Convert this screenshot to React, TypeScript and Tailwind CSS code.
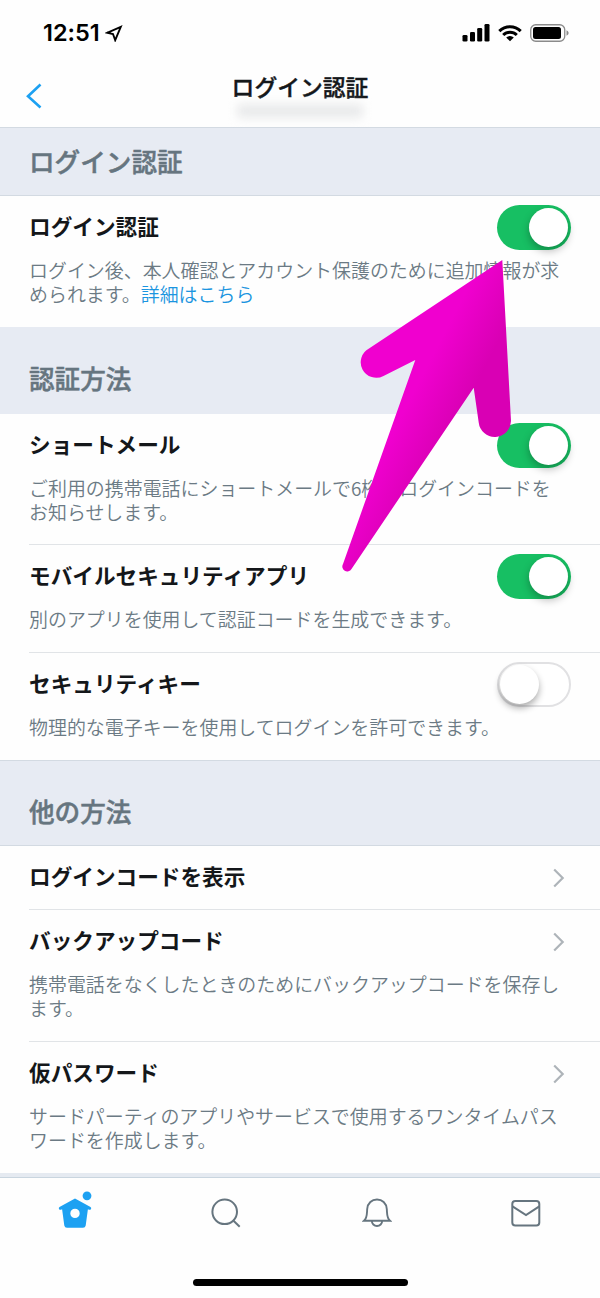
import React from "react";

function Toggle({ on }: { on: boolean }) {
  return on ? (
    <div className="flex h-[45px] w-[74px] shrink-0 items-center justify-end rounded-full bg-[#17bf63] pr-[3px]">
      <div className="size-[39px] rounded-full bg-white shadow-[0_4px_8px_rgba(0,0,0,0.28)]" />
    </div>
  ) : (
    <div className="flex h-[45px] w-[74px] shrink-0 items-center rounded-full border-[2.5px] border-[#e1e1e3] bg-white pl-px">
      <div className="size-[39px] rounded-full bg-white shadow-[0_4px_7px_rgba(0,0,0,0.33)]" />
    </div>
  );
}

function Chevron() {
  return (
    <svg className="mt-[13px] mr-[6px] shrink-0" width="12" height="20" viewBox="0 0 12 20" fill="none" stroke="#aeb4b9" strokeWidth="2.200">
      <path d="M1.200 1.500 9.700 10l-8.500 8.500" />
    </svg>
  );
}

function Section({ title, className }: { title: string; className: string }) {
  return (
    <div className={`flex items-end border-[#d3dae2] bg-[#e7ebf3] pl-[29px] ${className}`}>
      <h2 className="text-[25.6px] leading-[30px] font-medium text-[#66757f] [-webkit-text-stroke:0.5px_#66757f]">{title}</h2>
    </div>
  );
}

type RowProps = { title: string; desc?: React.ReactNode; control: React.ReactNode; className: string; line?: boolean };

function Row({ title, desc, control, className, line = true }: RowProps) {
  return (
    <div className={`pl-[29px] ${className}`}>
      <div className={`h-full pt-[9px] ${line ? "border-b border-[#e1e4e7]" : ""}`}>
        <div className="flex h-[45px] justify-between pr-[29px]">
          <h3 className="pt-[9px] text-[21.650px] leading-[24px] font-semibold text-[#14171a]">{title}</h3>
          {control}
        </div>
        {desc && <p className="mt-[8px] text-[18.950px] leading-[24.400px] font-[350] whitespace-nowrap text-[#6b7a84]">{desc}</p>}
      </div>
    </div>
  );
}

export default function App() {
  return (
    <div className="relative flex h-[1298px] w-[600px] flex-col overflow-hidden bg-[#fefefe] font-['Noto_Sans_CJK_JP',sans-serif]">
      <header className="h-[128px] border-b border-[#d3dae2]">
        <div className="flex h-[66px] items-center justify-between pr-[31px] pl-[43px]">
          <div className="flex items-center gap-[5px]">
            <span className="font-['Inter',sans-serif] text-[23.5px] leading-[28px] font-semibold tracking-[-0.050px] text-black">12:51</span>
            <svg width="18" height="17" viewBox="0 0 18 17" fill="none" stroke="#000" strokeWidth="1.900">
              <path d="M15.800 1.800 2 7.800 8 9 10.200 15.200Z" />
            </svg>
          </div>
          <div className="flex items-center gap-[8px]">
            <svg width="28" height="18" viewBox="0 0 28 18">
              <rect x="0.500" y="11" width="5" height="6.500" rx="1.300" />
              <rect x="8" y="8" width="5" height="9.500" rx="1.300" />
              <rect x="15.200" y="4" width="5" height="13.500" rx="1.300" />
              <rect x="22.500" y="0" width="5" height="17.500" rx="1.300" />
            </svg>
            <svg width="24" height="18" viewBox="0 0 24 18" fill="none" stroke="#000" strokeWidth="3">
              <path d="M1.300 7.100a15.200 15.200 0 0 1 21.400 0M5.200 11a9.700 9.700 0 0 1 13.600 0" />
              <path d="M8.200 13.500a5.500 5.500 0 0 1 7.600 0L12 17.300Z" fill="#000" stroke="none" />
            </svg>
            <svg width="39" height="18" viewBox="0 0 39 18">
              <rect x="0.750" y="0.750" width="34" height="16.500" rx="5" fill="none" stroke="#8b8b8b" strokeWidth="1.300" />
              <rect x="3" y="3" width="28" height="12" rx="2.500" />
              <path d="M36.500 6.200q2.200 1.200 2.200 2.800t-2.200 2.800Z" fill="#8b8b8b" />
            </svg>
          </div>
        </div>
        <div className="grid grid-cols-[80px_1fr_80px]">
          <svg className="mt-[17px] ml-[26px]" width="16" height="26" viewBox="0 0 16 26" fill="none" stroke="#1da1f2" strokeWidth="2.600">
            <path d="M14.500 1.500 2 13.200l12.500 11.300" />
          </svg>
          <div className="flex flex-col items-center pt-[7px]">
            <h1 className="text-[22.8px] leading-[28px] font-medium text-[#14171a] [-webkit-text-stroke:0.400px_#14171a]">ログイン認証</h1>
            <div className="mt-[3px] h-[14px] w-[126px] rounded bg-[#e9eaeb] blur-[5px]" />
          </div>
        </div>
      </header>

      <Section title="ログイン認証" className="h-[68px] border-b pb-[19px]" />
      <Row
        title="ログイン認証"
        className="h-[131px]"
        line={false}
        control={<Toggle on />}
        desc={<>ログイン後、本人確認とアカウント保護のために追加情報が求<br />められます。<a className="text-[#1b95e0]">詳細はこちら</a></>}
      />
      <Section title="認証方法" className="h-[87px] pb-[21px]" />
      <Row
        title="ショートメール"
        className="h-[131px]"
        control={<Toggle on />}
        desc={<>ご利用の携帯電話にショートメールで6桁のログインコードを<br />お知らせします。</>}
      />
      <Row title="モバイルセキュリティアプリ" className="h-[108px]" control={<Toggle on />} desc="別のアプリを使用して認証コードを生成できます。" />
      <Row title="セキュリティキー" className="h-[107px]" line={false} control={<Toggle on={false} />} desc="物理的な電子キーを使用してログインを許可できます。" />
      <Section title="他の方法" className="h-[86px] border-y pb-[19px]" />
      <Row title="ログインコードを表示" className="h-[64px]" control={<Chevron />} />
      <Row
        title="バックアップコード"
        className="h-[132px]"
        control={<Chevron />}
        desc={<>携帯電話をなくしたときのためにバックアップコードを保存し<br />ます。</>}
      />
      <Row
        title="仮パスワード"
        className="h-[131px]"
        line={false}
        control={<Chevron />}
        desc={<>サードパーティのアプリやサービスで使用するワンタイムパス<br />ワードを作成します。</>}
      />
      <div className="h-[5px] border-b border-[#c9d5df] bg-[#e5eaf1]" />
      <nav className="grid h-[72px] grid-cols-4">
        <div className="flex justify-center pt-[12px]">
          <svg width="34" height="40" viewBox="0 0 34 40" fill="#1da1f2">
            <circle cx="29" cy="5.800" r="4.400" />
            <path fillRule="evenodd" d="M17 8.500 32.500 17q1.200.8.500 2t-2 .7l-1.100-.5-2.200 16.300q-.4 2.300-2.700 2.300H9q-2.300 0-2.700-2.300L4.100 19.200l-1.100.5q-1.300.5-2-.7t.5-2ZM17 18.700a4.700 4.700 0 1 0 0 9.400 4.700 4.700 0 0 0 0-9.400Z" />
          </svg>
        </div>
        <div className="flex justify-center pt-[20px] pl-[2px]">
          <svg width="32" height="32" viewBox="0 0 32 32" fill="none" stroke="#66757f" strokeWidth="2">
            <circle cx="14.700" cy="13.800" r="12.300" />
            <path d="m23 22.300 6.700 6.500" />
          </svg>
        </div>
        <div className="flex justify-center pt-[20px] pl-[3px]">
          <svg width="30" height="32" viewBox="0 0 30 32" fill="none" stroke="#66757f" strokeWidth="1.900">
            <path d="M2 22.800c3.400-3 2.800-7 3.200-11.800C5.700 5 9.800 1.500 15 1.500S24.300 5 24.800 11c.4 4.800-.2 8.800 3.200 11.800ZM9.800 22.800a5.200 5.200 0 0 0 10.400 0" />
          </svg>
        </div>
        <div className="flex justify-center pt-[20px]">
          <svg width="32" height="32" viewBox="0 0 32 32" fill="none" stroke="#66757f" strokeWidth="2">
            <rect x="3.300" y="3" width="27" height="24.500" rx="3" />
            <path d="m3.500 8.300 13.500 8.700 13.300-8.700" />
          </svg>
        </div>
      </nav>
      <div className="mx-auto mt-[29px] h-[7px] w-[215px] rounded-full bg-black" />

      <svg className="absolute top-[250px] left-[335px]" width="190" height="330" viewBox="335 250 190 330">
        <defs>
          <linearGradient id="arrow" gradientUnits="userSpaceOnUse" x1="412" y1="395" x2="458" y2="419">
            <stop offset="0" stopColor="#f000cf" />
            <stop offset="1" stopColor="#d900b4" />
          </linearGradient>
        </defs>
        <path d="M502.300 260 369 348.500A15.500 15.500 0 0 0 383.500 376L415.300 360 343 564A4.700 4.700 0 0 0 351.500 569L473.700 387.700 478.700 422.500A16.200 16.200 0 0 0 511 421Z" fill="url(#arrow)" />
      </svg>
    </div>
  );
}
